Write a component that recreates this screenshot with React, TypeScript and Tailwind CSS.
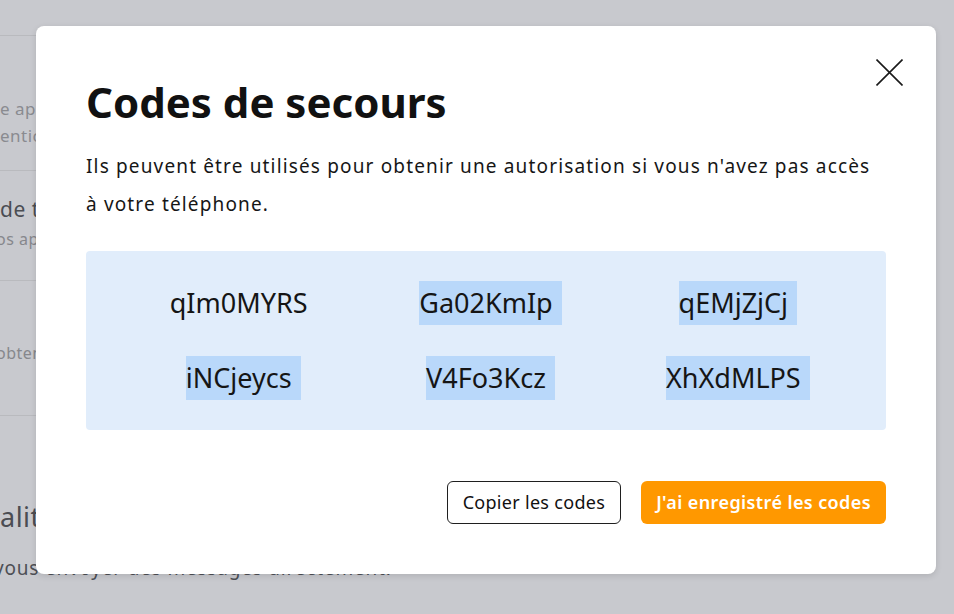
import React from "react";

const codes = [
  { c: "qIm0MYRS", sel: false },
  { c: "Ga02KmIp", sel: true },
  { c: "qEMjZjCj", sel: true },
  { c: "iNCjeycs", sel: true },
  { c: "V4Fo3Kcz", sel: true },
  { c: "XhXdMLPS", sel: true },
];

export default function App() {
  return (
    <div
      className="relative h-[614px] w-[954px] overflow-hidden bg-[#c8c9ce]"
      style={{ fontFamily: '"Noto Sans", "Open Sans", sans-serif' }}
    >
      {/* background page (dimmed) */}
      <div className="flex flex-col whitespace-nowrap">
        <div className="mt-[35px] h-px w-[60px] bg-[#b9babe]" />
        <div className="mt-[59px] text-[17px] leading-[27px] tracking-[0.5px] text-[#8a8b90]">e application</div>
        <div className="text-[17px] leading-[27px] tracking-[0.5px] text-[#8a8b90]">entication</div>
        <div className="mt-[21px] h-px w-[60px] bg-[#b9babe]" />
        <div className="mt-[24px] text-[21px] leading-[28px] tracking-[0.5px] text-[#4b4d53]">de texte</div>
        <div className="mt-[4px] -ml-[4px] text-[16px] leading-[24px] tracking-[0.5px] text-[#86878c]">os applications</div>
        <div className="mt-[29px] h-px w-[60px] bg-[#b9babe]" />
        <div className="mt-[60px] -ml-[4px] text-[16px] leading-[24px] tracking-[0.5px] text-[#86878c]">obtenir</div>
        <div className="mt-[50px] h-px w-[60px] bg-[#b9babe]" />
        <div className="mt-[84px] text-[27px] leading-[34px] tracking-[0.5px] text-[#4b4d53]">alité</div>
        <div className="mt-[20px] -ml-[6px] text-[19px] leading-[28px] tracking-[0.8px] text-[#4d4f55]">
          vous envoyer des messages directement.
        </div>
      </div>

      {/* modal */}
      <div className="absolute left-[36px] top-[26px] flex h-[548px] w-[900px] flex-col rounded-[8px] bg-white px-[50px] pt-[52px] shadow-[0_2px_6px_rgba(0,0,0,0.12)]">
        <button className="absolute right-[33px] top-[33px] h-[27px] w-[27px] text-[#1a1a1a]">
          <svg viewBox="0 0 27 27" width="27" height="27" fill="none" stroke="currentColor" strokeWidth="1.6">
            <path d="M0.5 0.5 L26.5 26.5 M26.5 0.5 L0.5 26.5" />
          </svg>
        </button>

        <h1 className="text-[42px] font-bold leading-[48px] text-[#111]">Codes de secours</h1>
        <p className="mt-[21px] text-[19px] leading-[38px] tracking-[1.15px] text-[#161616]">
          Ils peuvent être utilisés pour obtenir une autorisation si vous n'avez pas accès
          <br />à votre téléphone.
        </p>

        <div className="mt-[28px] grid grid-cols-3 gap-y-[31px] rounded-[4px] bg-[#e1edfb] px-[29px] py-[30px]">
          {codes.map(({ c, sel }) => (
            <div key={c} className="flex justify-center">
              <span
                className={
                  sel
                    ? "inline-block h-[44px] bg-[#b9d8fa] text-[27px] leading-[44px] text-[#151515] shadow-[9px_0_0_0_#b9d8fa]"
                    : "inline-block h-[44px] text-[27px] leading-[44px] text-[#151515]"
                }
              >
                {c}
              </span>
            </div>
          ))}
        </div>

        <div className="mt-[51px] flex justify-end gap-[20px]">
          <button className="h-[43px] rounded-[6px] border border-[#1f1f1f] bg-white px-[15px] text-[18px] tracking-[0.3px] text-[#111]">
            Copier les codes
          </button>
          <button className="h-[43px] rounded-[6px] bg-[#ff9800] px-[15px] text-[18px] font-semibold tracking-[0.4px] text-white">
            J'ai enregistré les codes
          </button>
        </div>
      </div>
    </div>
  );
}
